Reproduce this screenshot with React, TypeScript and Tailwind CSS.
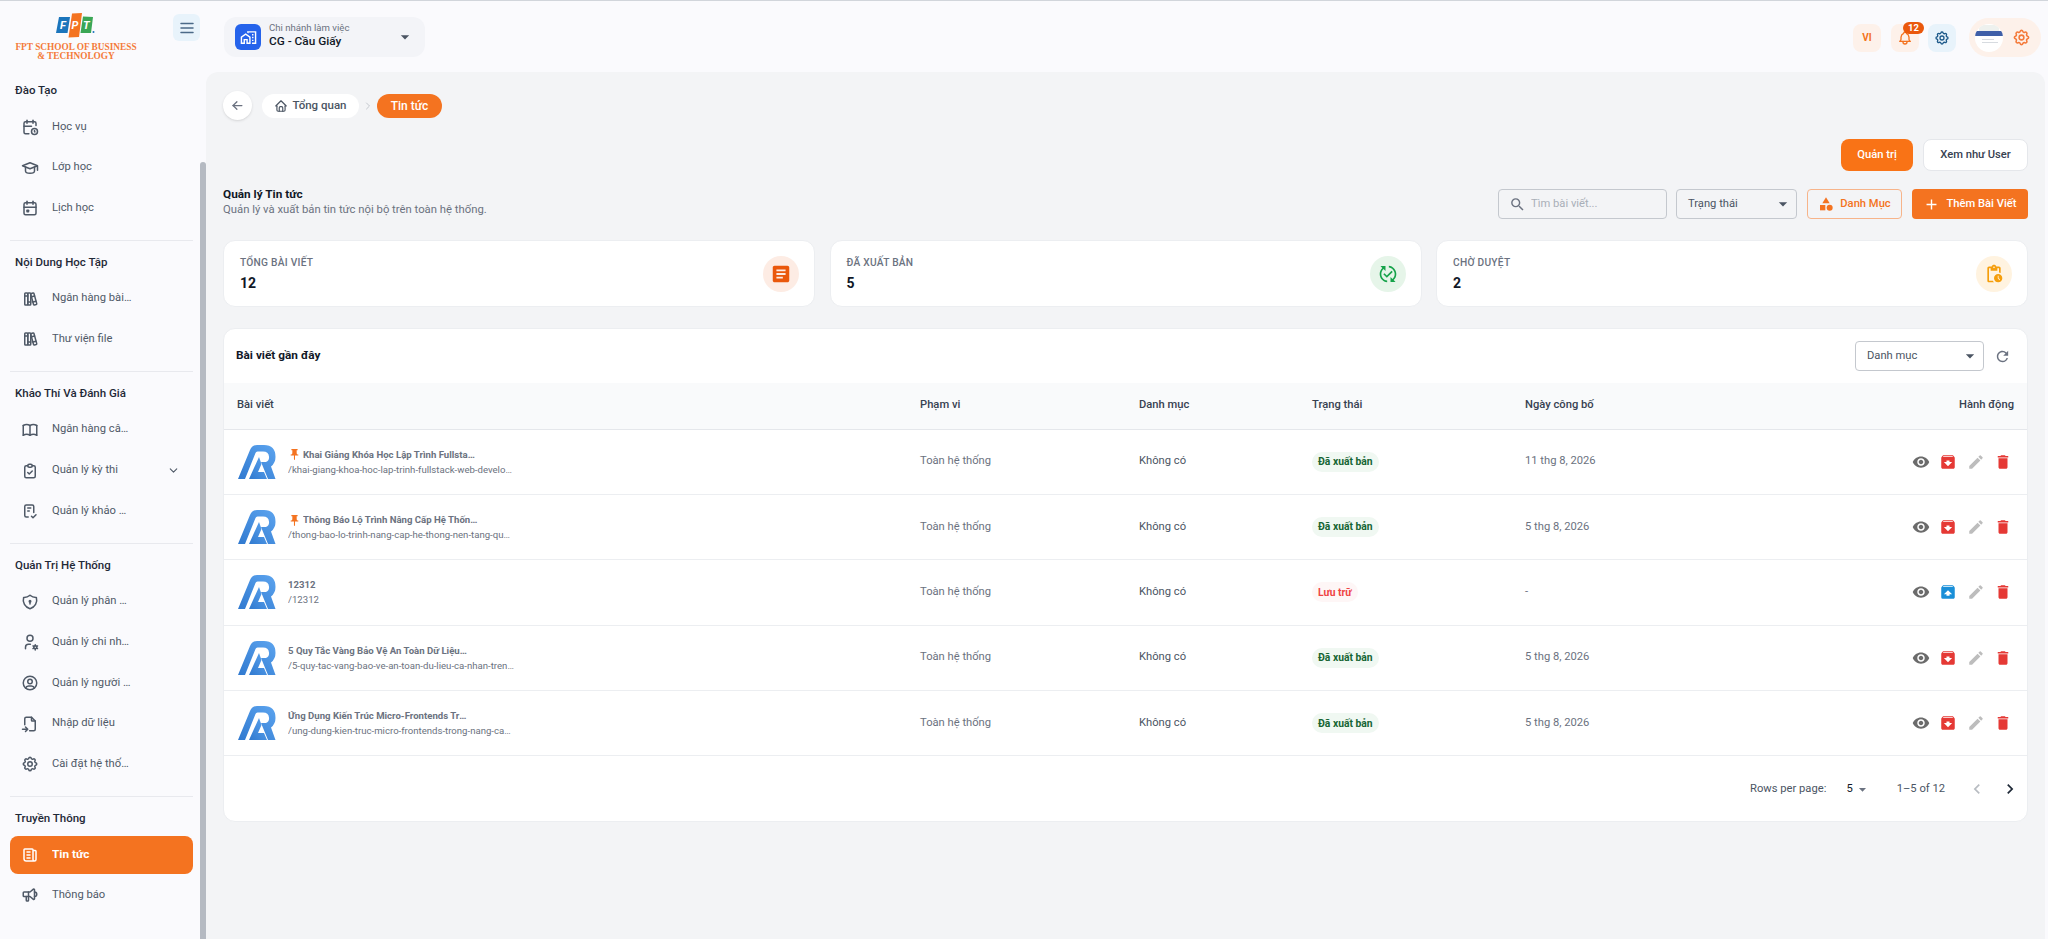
import type { ReactNode } from "react";
import {
  TbArrowLeft,
  TbBell,
  TbBook,
  TbBooks,
  TbCalendarClock,
  TbCalendarEvent,
  TbChecklist,
  TbChevronDown,
  TbChevronRight,
  TbClipboardCheck,
  TbFileImport,
  TbHome,
  TbMenu2,
  TbNews,
  TbSchool,
  TbSettings,
  TbShieldLock,
  TbSpeakerphone,
  TbUserCircle,
  TbUserCog,
} from "react-icons/tb";
import {
  MdAdd,
  MdArchive,
  MdArrowDropDown,
  MdArticle,
  MdCategory,
  MdChevronLeft,
  MdChevronRight,
  MdDelete,
  MdEdit,
  MdOutlineMapsHomeWork,
  MdOutlinePendingActions,
  MdPublishedWithChanges,
  MdPushPin,
  MdRefresh,
  MdSearch,
  MdUnarchive,
  MdVisibility,
} from "react-icons/md";

const navSections = [
  {
    label: "Đào Tạo",
    items: [
      { icon: TbCalendarClock, text: "Học vụ" },
      { icon: TbSchool, text: "Lớp học" },
      { icon: TbCalendarEvent, text: "Lịch học" },
    ],
  },
  {
    label: "Nội Dung Học Tập",
    items: [
      { icon: TbBooks, text: "Ngân hàng bài giảng" },
      { icon: TbBooks, text: "Thư viện file" },
    ],
  },
  {
    label: "Khảo Thí Và Đánh Giá",
    items: [
      { icon: TbBook, text: "Ngân hàng câu hỏi" },
      { icon: TbClipboardCheck, text: "Quản lý kỳ thi", chevron: true },
      { icon: TbChecklist, text: "Quản lý khảo sát" },
    ],
  },
  {
    label: "Quản Trị Hệ Thống",
    items: [
      { icon: TbShieldLock, text: "Quản lý phân quyền" },
      { icon: TbUserCog, text: "Quản lý chi nhánh" },
      { icon: TbUserCircle, text: "Quản lý người dùng" },
      { icon: TbFileImport, text: "Nhập dữ liệu" },
      { icon: TbSettings, text: "Cài đặt hệ thống" },
    ],
  },
  {
    label: "Truyền Thông",
    items: [
      { icon: TbNews, text: "Tin tức", active: true },
      { icon: TbSpeakerphone, text: "Thông báo" },
    ],
  },
];

const stats = [
  { label: "Tổng bài viết", value: "12", icon: <MdArticle className="text-[22px] text-[#ea580c]" />, bg: "bg-[#fdece4]" },
  { label: "Đã xuất bản", value: "5", icon: <MdPublishedWithChanges className="text-[20px] text-[#16a34a]" />, bg: "bg-[#e6f5e9]" },
  { label: "Chờ duyệt", value: "2", icon: <MdOutlinePendingActions className="text-[20px] text-[#f59e0b]" />, bg: "bg-[#fff3e0]" },
];

const posts = [
  { title: "Khai Giảng Khóa Học Lập Trình Fullstack Web Developer", slug: "/khai-giang-khoa-hoc-lap-trinh-fullstack-web-developer-2026", pinned: true, status: "pub", date: "11 thg 8, 2026" },
  { title: "Thông Báo Lộ Trình Nâng Cấp Hệ Thống Nền Tảng", slug: "/thong-bao-lo-trinh-nang-cap-he-thong-nen-tang-quan-ly", pinned: true, status: "pub", date: "5 thg 8, 2026" },
  { title: "12312", slug: "/12312", pinned: false, status: "arc", date: "-" },
  { title: "5 Quy Tắc Vàng Bảo Vệ An Toàn Dữ Liệu Cá Nhân", slug: "/5-quy-tac-vang-bao-ve-an-toan-du-lieu-ca-nhan-tren-mang", pinned: false, status: "pub", date: "5 thg 8, 2026" },
  { title: "Ứng Dụng Kiến Trúc Micro-Frontends Trong Nâng Cấp", slug: "/ung-dung-kien-truc-micro-frontends-trong-nang-cap-he-thong", pinned: false, status: "pub", date: "5 thg 8, 2026" },
];

function FptLogo() {
  return (
    <svg width="41" height="25" viewBox="0 0 41 25">
      <path d="M3 4 L14 4 L11.5 20 L0 20 Z" fill="#1b75bc" />
      <path d="M16 0.5 L26 0 L23 24 L12.5 24.5 Z" fill="#f47321" />
      <path d="M27 3.5 L37 4 L35 20 L24.5 20 Z" fill="#3aa655" />
      <circle cx="37.5" cy="19" r="1" fill="#1b75bc" />
      <text x="4" y="16" fontSize="11" fontWeight="700" fontStyle="italic" fill="#fff" fontFamily="Roboto, sans-serif">F</text>
      <text x="15.5" y="16" fontSize="11" fontWeight="700" fontStyle="italic" fill="#fff" fontFamily="Roboto, sans-serif">P</text>
      <text x="27" y="16" fontSize="11" fontWeight="700" fontStyle="italic" fill="#fff" fontFamily="Roboto, sans-serif">T</text>
    </svg>
  );
}

function PostLogo() {
  return (
    <svg width="39" height="36" viewBox="0 0 39 36" className="shrink-0">
      <defs>
        <linearGradient id="ra" x1="0" y1="1" x2="1" y2="0">
          <stop offset="0" stopColor="#3079cf" />
          <stop offset="1" stopColor="#5ca4ef" />
        </linearGradient>
      </defs>
      <path
        d="M1 35 L13 6 Q15 1 20 1 L27 1 Q38.5 1 38.5 13 Q38.5 19 34 22.5 L38.5 35 L31 35 L24 18 L29 18 Q32.5 16.5 32 12.5 Q31.5 7.5 26 7.5 L20.5 7.5 Q19 7.5 18.5 9 L8 35 Z"
        fill="url(#ra)"
      />
      <path d="M12 35 L22 13 L24.5 20 L21 28 L27 28 L30 35 Z" fill="url(#ra)" />
    </svg>
  );
}

function Sidebar() {
  return (
    <aside className="w-[206px] shrink-0 flex flex-col h-full overflow-hidden">
      <div className="h-[71px] shrink-0 flex items-start">
        <div className="w-[152px] pt-[12px] flex flex-col items-center">
          <FptLogo />
          <div className="mt-[5px] text-center text-[9.3px] leading-[9px] font-bold text-[#f47a3a] font-['Liberation_Serif',serif] whitespace-nowrap">
            FPT SCHOOL OF BUSINESS
            <br />& TECHNOLOGY
          </div>
        </div>
        <button className="ml-[21px] mt-[13px] w-[27px] h-[27px] rounded-md bg-[#e8f3fb] flex items-center justify-center text-[#4b6a88]">
          <TbMenu2 className="text-[18px]" />
        </button>
      </div>
      <div className="flex-1 flex min-h-0">
        <nav className="w-[200px] overflow-hidden pl-[10px] pr-[7px] pt-[9px]">
          {navSections.map((s, i) => (
            <div key={s.label} className={i > 0 ? "border-t border-[#e8e9ee] pt-[12px] mt-[12.4px]" : ""}>
              <div className="h-[18px] leading-[18px] pl-[5px] mb-[9px] text-[11.5px] font-medium text-[#1f2937] whitespace-nowrap">{s.label}</div>
              {s.items.map((it: any) => {
                const Icon = it.icon;
                return (
                  <div
                    key={it.text}
                    className={
                      it.active
                        ? "h-[38px] mb-[2.7px] rounded-lg bg-[#f47320] text-white flex items-center pl-[11px]"
                        : "h-[38px] mb-[2.7px] flex items-center pl-[11px] text-[#4f5967]"
                    }
                  >
                    <Icon className="text-[18px] shrink-0" />
                    <span className={it.active ? "ml-[13px] w-[80px] truncate text-[11.8px] font-bold" : "ml-[13px] w-[80px] truncate text-[11.2px]"}>{it.text}</span>
                    {it.chevron && <TbChevronDown className="ml-[35px] text-[13px]" />}
                  </div>
                );
              })}
            </div>
          ))}
        </nav>
        <div className="w-[6px] mt-[90px] bg-[#b5bac2] rounded-t-sm" />
      </div>
    </aside>
  );
}

function IconBox({ bg, children }: { bg: string; children: ReactNode }) {
  return <div className={`w-[28px] h-[28px] rounded-lg flex items-center justify-center ${bg}`}>{children}</div>;
}

function Header() {
  return (
    <header className="h-[71px] shrink-0 flex items-start justify-between pl-[18px] pr-[4px]">
      <div className="mt-[16px] w-[201px] h-[40px] rounded-xl bg-[#f3f4f8] flex items-center pl-[11px] pr-[10px]">
        <div className="w-[26px] h-[26px] rounded-md bg-[#2563eb] flex items-center justify-center text-white">
          <MdOutlineMapsHomeWork className="text-[17px]" />
        </div>
        <div className="ml-[8px] flex-1 mb-[4px]">
          <div className="text-[9.6px] leading-[12px] text-[#6b7280]">Chi nhánh làm việc</div>
          <div className="text-[11.8px] leading-[14px] font-medium text-[#111827]">CG - Cầu Giấy</div>
        </div>
        <MdArrowDropDown className="text-[20px] text-[#4b5563]" />
      </div>
      <div className="mt-[17px] flex items-center">
        <IconBox bg="bg-[#fdf1ea]">
          <span className="text-[10px] font-bold text-[#f47320]">VI</span>
        </IconBox>
        <div className="relative ml-[10px]">
          <IconBox bg="bg-[#fdf1ea]">
            <TbBell className="text-[16px] text-[#f47320]" />
          </IconBox>
          <span className="absolute -top-[2px] left-[12px] w-[21px] h-[12px] rounded-full bg-[#ea580c] text-white text-[9.5px] leading-[12px] font-bold text-center">12</span>
        </div>
        <div className="ml-[9px]">
          <IconBox bg="bg-[#e8f3fb]">
            <TbSettings className="text-[16px] text-[#1e5a8a]" />
          </IconBox>
        </div>
        <div className="ml-[13px] w-[72px] h-[39px] rounded-full bg-[#fdf1ea] flex items-center pl-[6px]">
          <div className="w-[28px] h-[28px] rounded-full bg-white overflow-hidden flex flex-col">
            <div className="h-[6px] mt-[1px] mx-[4px] bg-[#eef1ee]" />
            <div className="h-[5px] bg-[#3f5fa8]" />
            <div className="h-[1px] w-[12px] mt-[3px] ml-[7px] bg-[#d7dbe0]" />
            <div className="h-[1px] w-[16px] mt-[2px] ml-[7px] bg-[#d7dbe0]" />
          </div>
          <TbSettings className="ml-[9px] text-[19px] text-[#f47a3a]" />
        </div>
      </div>
    </header>
  );
}

function Badge({ status }: { status: string }) {
  if (status === "pub") {
    return <span className="inline-flex items-center h-[20px] px-[6px] rounded-full bg-[#f0f8f2] text-[#166534] text-[10.3px] font-bold">Đã xuất bản</span>;
  }
  return <span className="inline-flex items-center h-[20px] px-[6px] rounded-full bg-[#fef6f6] text-[#ef4444] text-[10.3px] font-bold">Lưu trữ</span>;
}

function PostsTable() {
  return (
    <table className="w-full table-fixed border-collapse text-left">
      <colgroup>
        <col className="w-[683px]" />
        <col className="w-[219px]" />
        <col className="w-[173px]" />
        <col className="w-[212px]" />
        <col />
        <col className="w-[200px]" />
      </colgroup>
      <thead>
        <tr className="h-[46px] bg-[#f9fafb] border-b border-[#e5e7eb] text-[11.2px] font-medium text-[#374151]">
          <th className="font-medium pl-[13px]">Bài viết</th>
          <th className="font-medium pl-[13px]">Phạm vi</th>
          <th className="font-medium pl-[13px]">Danh mục</th>
          <th className="font-medium pl-[13px]">Trạng thái</th>
          <th className="font-medium pl-[14px]">Ngày công bố</th>
          <th className="font-medium pr-[13px] text-right">Hành động</th>
        </tr>
      </thead>
      <tbody>
        {posts.map((p) => (
          <tr key={p.slug} className="h-[65.4px] border-b border-[#eceef1] text-[11.2px]">
            <td className="pl-[13px]">
              <div className="flex items-center">
                <PostLogo />
                <div className="ml-[12px]">
                  <div className="flex items-center h-[14px] text-[9.6px] font-bold text-[#6b7280]">
                    {p.pinned && <MdPushPin className="text-[13px] text-[#f47320] mr-[2px]" />}
                    <span className={p.pinned ? "w-[176px] truncate" : "w-[180px] truncate"}>{p.title}</span>
                  </div>
                  <div className="mt-[1px] w-[226.5px] truncate text-[9.6px] leading-[13px] text-[#6b7280]">{p.slug}</div>
                </div>
              </div>
            </td>
            <td className="pl-[13px] text-[#6b7280]">Toàn hệ thống</td>
            <td className="pl-[13px] text-[#4b5563]">Không có</td>
            <td className="pl-[13px]">
              <Badge status={p.status} />
            </td>
            <td className="pl-[14px] text-[#6b7280]">{p.date}</td>
            <td className="pr-[15px]">
              <div className="flex items-center justify-end gap-[9.5px]">
                <MdVisibility className="text-[18px] text-[#6b6b6b]" />
                {p.status === "pub" ? <MdArchive className="text-[18px] text-[#e53935]" /> : <MdUnarchive className="text-[18px] text-[#1a8fd8]" />}
                <MdEdit className="text-[18px] text-[#bdbdbd]" />
                <MdDelete className="text-[18px] text-[#e53935]" />
              </div>
            </td>
          </tr>
        ))}
      </tbody>
    </table>
  );
}

export default function App() {
  return (
    <div className="h-screen w-full flex overflow-hidden bg-[#fafafd] border-t border-[#d1d5db] font-['Roboto',sans-serif]">
      <Sidebar />
      <div className="flex-1 min-w-0 flex flex-col pr-[3px]">
        <Header />
        <main className="flex-1 min-h-0 bg-[#f3f4f6] rounded-t-xl px-[17px] pt-[19px]">
          {/* breadcrumb */}
          <div className="h-[29px] flex items-center">
            <button className="w-[29px] h-[29px] rounded-full bg-white shadow-sm flex items-center justify-center text-[#6b7280]">
              <TbArrowLeft className="text-[15px]" />
            </button>
            <div className="ml-[10px] h-[24px] w-[97px] rounded-full bg-white flex items-center justify-center text-[11.5px] font-medium text-[#4b5563]">
              <TbHome className="text-[14px] mr-[4px]" />
              Tổng quan
            </div>
            <TbChevronRight className="mx-[3px] text-[12px] text-[#c4c8ce]" />
            <div className="h-[24px] w-[65px] rounded-full bg-[#f47320] flex items-center justify-center text-[12px] font-medium text-white">Tin tức</div>
          </div>

          <div className="mt-[19px] flex justify-end gap-[10px]">
            <button className="w-[72px] h-[32px] rounded-lg bg-[#f97316] text-white text-[11.2px] font-medium">Quản trị</button>
            <button className="w-[105px] h-[32px] rounded-lg bg-white border border-[#e5e7eb] text-[#374151] text-[11.2px] font-medium">Xem như User</button>
          </div>

          {/* title + toolbar */}
          <div className="mt-[18px] h-[30px] flex items-center justify-between">
            <div className="mb-[4px]">
              <div className="text-[11.8px] leading-[16px] font-bold text-[#111827]">Quản lý Tin tức</div>
              <div className="text-[11.3px] leading-[16px] text-[#6b7280]">Quản lý và xuất bản tin tức nội bộ trên toàn hệ thống.</div>
            </div>
            <div className="flex items-center">
              <div className="w-[169px] h-[30px] rounded border border-[#c4c8ce] flex items-center pl-[10px]">
                <MdSearch className="text-[17px] text-[#6b7280] shrink-0" />
                <input placeholder="Tìm bài viết..." className="ml-[5px] w-[120px] bg-transparent outline-none text-[11.2px] placeholder:text-[#a9afb8]" />
              </div>
              <div className="ml-[9px] w-[121px] h-[30px] rounded border border-[#c4c8ce] flex items-center justify-between pl-[11px] pr-[3px] text-[11.2px] text-[#4b5563]">
                Trạng thái
                <MdArrowDropDown className="text-[20px] text-[#4b5563]" />
              </div>
              <button className="ml-[10px] w-[95px] h-[30px] rounded border border-[#f7b48a] flex items-center justify-center text-[11.2px] font-medium text-[#f47320]">
                <MdCategory className="text-[16px] mr-[6px]" />
                Danh Mục
              </button>
              <button className="ml-[10px] w-[116px] h-[30px] rounded bg-[#f47320] flex items-center justify-center text-[11.2px] font-medium text-white">
                <MdAdd className="text-[17px] mr-[6px]" />
                Thêm Bài Viết
              </button>
            </div>
          </div>

          {/* stat cards */}
          <div className="mt-[21px] grid grid-cols-3 gap-[14.5px]">
            {stats.map((s) => (
              <div key={s.label} className="h-[67px] rounded-xl bg-white border border-[#eceef1] flex items-center justify-between pl-[16px] pr-[15px]">
                <div>
                  <div className="text-[10.2px] leading-[14px] font-medium uppercase tracking-wide text-[#6b7280]">{s.label}</div>
                  <div className="mt-[4px] text-[14px] leading-[18px] font-bold text-[#111827]">{s.value}</div>
                </div>
                <div className={`w-[36px] h-[36px] rounded-full flex items-center justify-center ${s.bg}`}>{s.icon}</div>
              </div>
            ))}
          </div>

          {/* table card */}
          <div className="mt-[21px] h-[494px] rounded-xl bg-white border border-[#eceef1] overflow-hidden">
            <div className="h-[54px] flex items-center justify-between pl-[12px] pr-[16px]">
              <div className="text-[11.8px] font-bold text-[#111827]">Bài viết gần đây</div>
              <div className="flex items-center">
                <div className="w-[129px] h-[30px] rounded border border-[#c4c8ce] flex items-center justify-between pl-[11px] pr-[3px] text-[11.2px] text-[#4b5563]">
                  Danh mục
                  <MdArrowDropDown className="text-[20px] text-[#4b5563]" />
                </div>
                <MdRefresh className="ml-[10px] text-[17px] text-[#6b7280]" />
              </div>
            </div>
            <PostsTable />
            <div className="h-[66px] flex items-center justify-end text-[11.2px] text-[#4b5563] pr-[7px]">
              Rows per page:
              <span className="ml-[20px] text-[#111827]">5</span>
              <MdArrowDropDown className="ml-[1px] text-[17px] text-[#6b7280]" />
              <span className="ml-[26px]">1–5 of 12</span>
              <MdChevronLeft className="ml-[22px] text-[20px] text-[#b8bcc2]" />
              <MdChevronRight className="ml-[13px] text-[20px] text-[#1f2937]" />
            </div>
          </div>
        </main>
      </div>
    </div>
  );
}
